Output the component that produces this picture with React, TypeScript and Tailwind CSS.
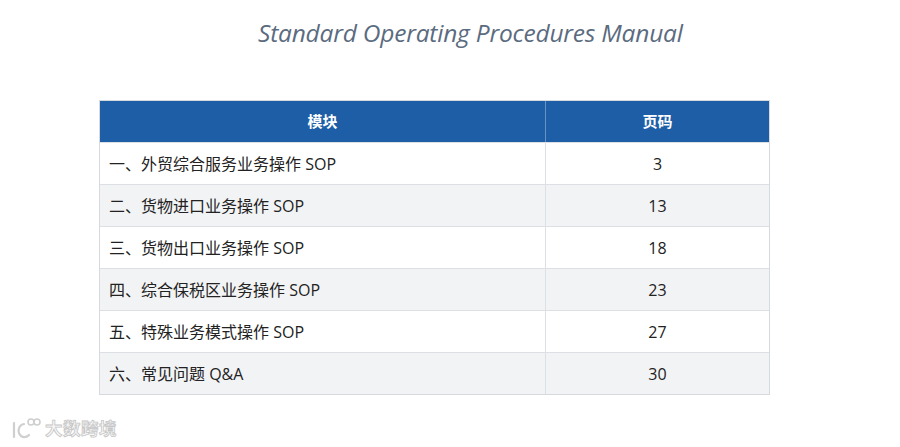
import React from "react";

const rows: [string, string][] = [
  ["一、外贸综合服务业务操作 SOP", "3"],
  ["二、货物进口业务操作 SOP", "13"],
  ["三、货物出口业务操作 SOP", "18"],
  ["四、综合保税区业务操作 SOP", "23"],
  ["五、特殊业务模式操作 SOP", "27"],
  ["六、常见问题 Q&A", "30"],
];

export default function App() {
  return (
    <div
      className="w-[900px] h-[447px] bg-white flex flex-col overflow-hidden"
      style={{ fontFamily: '"Open Sans", "Noto Sans CJK SC", sans-serif' }}
    >
      <div className="h-[66px] pt-[17px] pl-[258px]">
        <div className="text-[24.5px] italic leading-[32px] text-[#5b6b80] tracking-[-0.2px]">
          Standard Operating Procedures Manual
        </div>
      </div>
      <div className="pt-[34px] pl-[99px]">
        <div className="w-[671px] border border-[#d6d9de]">
          <div className="flex h-[41px] bg-[#1e5ea6] text-white font-bold text-[15px]">
            <div className="w-[446px] flex items-center justify-center border-r border-[#6a92c4]">
              模块
            </div>
            <div className="flex-1 flex items-center justify-center">页码</div>
          </div>
          {rows.map(([name, page], i) => (
            <div
              key={i}
              className={
                "flex h-[42px] border-t border-[#dcdfe3] text-[#222] " +
                (i % 2 === 1 ? "bg-[#f2f3f5]" : "bg-white")
              }
            >
              <div className="w-[446px] flex items-center pl-[9px] text-[16px] border-r border-[#dcdfe3]">
                {name}
              </div>
              <div className="flex-1 flex items-center justify-center text-[16px]">
                {page}
              </div>
            </div>
          ))}
        </div>
      </div>
      <div className="mt-auto mb-[6px] ml-[10px] flex items-center gap-[3px]">
        <svg width="32" height="24" viewBox="0 0 32 24" fill="none" stroke="#cfcfcf" strokeWidth="2.2" strokeLinecap="round">
          <path d="M4 7 V21" />
          <path d="M14 8 C8 9 7 17 11 20 C14 22 17 21 19 19" />
          <circle cx="21" cy="6" r="3" strokeWidth="1.6" />
          <circle cx="27" cy="6" r="3" strokeWidth="1.6" />
        </svg>
        <span
          className="text-[17.5px] font-bold text-[#f7f7f7] tracking-[0.5px] [-webkit-text-stroke:0.8px_#c6c6c6]"
          style={{ fontFamily: '"Noto Sans CJK SC", sans-serif' }}
        >
          大数跨境
        </span>
      </div>
    </div>
  );
}
